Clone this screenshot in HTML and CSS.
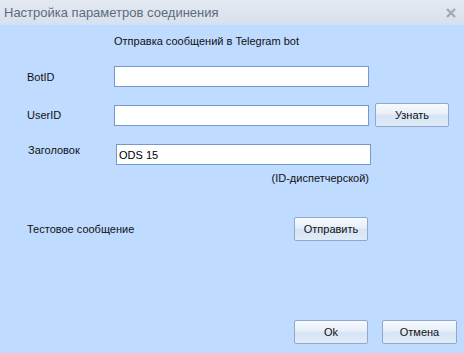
FILE: index.html
```html
<!DOCTYPE html>
<html lang="ru">
<head>
  <meta charset="UTF-8">
  <title>Настройка параметров соединения</title>
  <link rel="stylesheet" href="styles.css">
</head>
<body>
  <div class="window">
    <div class="titlebar">
      <span class="title">Настройка параметров соединения</span>
      <svg class="close" width="10" height="10" viewBox="0 0 10 10">
        <path d="M1 1 L9 9 M9 1 L1 9" />
      </svg>
    </div>

    <div class="content">
      <div class="heading">Отправка сообщений в Telegram bot</div>

      <!-- BotID -->
      <div class="row row-bot">
        <label class="field-label" for="botId">BotID</label>
        <input class="field" type="text" id="botId">
      </div>

      <!-- UserID -->
      <div class="row row-user">
        <label class="field-label" for="userId">UserID</label>
        <input class="field" type="text" id="userId">
        <button class="btn btn-find">Узнать</button>
      </div>

      <!-- Header -->
      <div class="row row-header">
        <label class="field-label field-label-top" for="header">Заголовок</label>
        <input class="field field-shift" type="text" id="header" value="ODS 15">
      </div>
      <div class="hint">(ID-диспетчерской)</div>

      <!-- Test message -->
      <div class="row row-test">
        <span class="test-label">Тестовое сообщение</span>
        <button class="btn">Отправить</button>
      </div>

      <div class="footer">
        <button class="btn">Ok</button>
        <button class="btn btn-cancel">Отмена</button>
      </div>
    </div>
  </div>
</body>
</html>
```

FILE: styles.css
```css
:root {
  --bg: #bfdbff;
  --title-bg: #dde5ef;
  --title-text: #5d6b7e;
  --field-border: #7598cf;
  --btn-border: #8fa9cc;
  --text: #111111;
}

body {
  margin: 0;
  font-family: 'Liberation Sans', Arial, sans-serif;
  font-size: 11px;
  color: var(--text);
}

.window {
  width: 464px;
  height: 353px;
  background-color: var(--bg);
  display: flex;
  flex-direction: column;
  overflow: hidden;
}

/* Title bar */
.titlebar {
  height: 23px;
  flex: none;
  display: flex;
  align-items: center;
  justify-content: space-between;
  padding: 0 8px 0 4px;
  background-image: linear-gradient(#e3e9f1, #d9e1ec);
  border-bottom: 2px solid #d2e2f6;
}

.title {
  font-size: 13px;
  color: var(--title-text);
  padding-top: 2px;
}

.close {
  margin-top: 2px;
}

.close path {
  stroke: #a1aab7;
  stroke-width: 2.4;
  fill: none;
}

/* Content */
.content {
  flex: 1;
  display: flex;
  flex-direction: column;
  padding: 0 7px 9px 27px;
}

.heading {
  margin-top: 9px;
  padding-left: 87px;
  line-height: 14px;
}

.row {
  display: flex;
  align-items: center;
}

.field-label {
  width: 87px;
  flex: none;
  line-height: 14px;
}

.field {
  width: 255px;
  height: 21px;
  box-sizing: border-box;
  border: 1px solid var(--field-border);
  background-color: white;
  padding: 0 2px;
  font-family: inherit;
  font-size: 11px;
  margin: 0;
  outline: none;
}

.row-bot {
  margin-top: 18px;
  height: 21px;
}

.row-user {
  margin-top: 16px;
  height: 24px;
}

.row-header {
  margin-top: 17px;
  height: 21px;
  align-items: flex-start;
}

.field-label-top {
  margin-left: 1px;
  width: 86px;
  margin-top: -1px;
}

.field-shift {
  margin-left: 2px;
}

.hint {
  margin-top: 6px;
  width: 342px;
  text-align: right;
  line-height: 14px;
}

.row-test {
  margin-top: 32px;
  height: 24px;
}

.test-label {
  width: 267px;
  flex: none;
}

/* Buttons */
.btn {
  width: 74px;
  height: 24px;
  box-sizing: border-box;
  border: 1px solid var(--btn-border);
  border-radius: 2px;
  background-image: linear-gradient(
    #f7fafe 0%,
    #e7eff9 45%,
    #d6e4f5 52%,
    #e1ebf8 100%
  );
  font-family: inherit;
  font-size: 11px;
  color: var(--text);
  padding: 0;
  margin: 0;
  cursor: pointer;
}

.btn-find {
  margin-left: 6px;
}

.footer {
  margin-top: auto;
  display: flex;
  justify-content: flex-end;
  gap: 14px;
}

.btn-cancel {
  width: 75px;
}
```
